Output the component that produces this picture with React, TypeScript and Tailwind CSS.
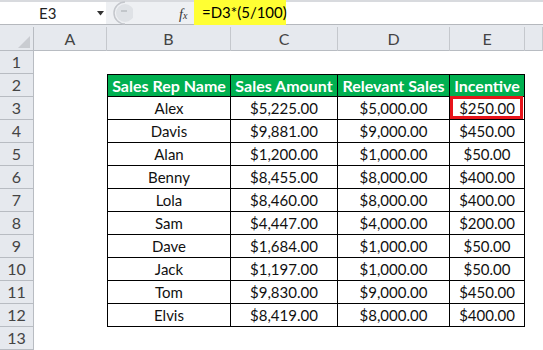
import React from "react";

const data: [string, string, string, string][] = [
  ["Alex", "$5,225.00", "$5,000.00", "$250.00"],
  ["Davis", "$9,881.00", "$9,000.00", "$450.00"],
  ["Alan", "$1,200.00", "$1,000.00", "$50.00"],
  ["Benny", "$8,455.00", "$8,000.00", "$400.00"],
  ["Lola", "$8,460.00", "$8,000.00", "$400.00"],
  ["Sam", "$4,447.00", "$4,000.00", "$200.00"],
  ["Dave", "$1,684.00", "$1,000.00", "$50.00"],
  ["Jack", "$1,197.00", "$1,000.00", "$50.00"],
  ["Tom", "$9,830.00", "$9,000.00", "$450.00"],
  ["Elvis", "$8,419.00", "$8,000.00", "$400.00"],
];

const headers = ["Sales Rep Name", "Sales Amount", "Relevant Sales", "Incentive"];
const cols = "grid-cols-[34px_73px_124px_107px_112px_75px_1fr]";

function RowHead({ n }: { n: number }) {
  return (
    <div className="h-[23px] bg-[#e6e9ee] border-r border-b border-[#b8bcc2] flex items-center justify-center text-[16px] text-[#444]">
      {n}
    </div>
  );
}

export default function App() {
  return (
    <div
      className="w-[543px] h-[350px] overflow-hidden bg-white text-black"
      style={{ fontFamily: "Lato, 'Open Sans', sans-serif" }}
    >
      {/* formula bar */}
      <div className="h-[25px] flex bg-[#eef0f3] border-t-[2px] border-[#d8dade] border-b border-b-[#b5b8bd]">
        <div className="w-[106px] bg-white flex items-center relative">
          <span className="absolute left-[39px] text-[15px] text-[#222]">E3</span>
          <svg className="absolute left-[97px] top-[9px]" width="7" height="5" viewBox="0 0 7 5">
            <path d="M0 0 L7 0 L3.5 4.5 Z" fill="#333" />
          </svg>
        </div>
        <div className="w-[88px] flex items-center relative">
          <svg className="absolute left-[3px] top-[-1px]" width="24" height="24" viewBox="0 0 24 24">
            <path d="M16 1 A11 11 0 0 0 16 23" fill="none" stroke="#c4c7cc" strokeWidth="1.5" />
            <circle cx="16" cy="12" r="9" fill="#dfe2e6" />
            <path d="M12 10 H18" stroke="#b9bcc1" strokeWidth="1.5" />
          </svg>
          <span
            className="absolute left-[73px] top-[2px] text-[14px] italic text-[#333]"
            style={{ fontFamily: "'Liberation Serif', serif" }}
          >
            f<span className="text-[10px]">x</span>
          </span>
        </div>
        <div className="flex-1 bg-white flex items-stretch">
          <div className="bg-[#ffff33] w-[92px] flex items-center pl-[8px] text-[15px] whitespace-nowrap mt-[-2px] mb-[-1px]">
            =D3*(5/100)
          </div>
        </div>
      </div>
      {/* spacer */}
      <div className="h-[2px] bg-[#e6e9ee]" />
      {/* column headers */}
      <div className={`grid ${cols} h-[24px] bg-[#e6e9ee] border-b border-[#b8bcc2]`}>
        <div className="border-r border-[#b8bcc2] relative">
          <svg className="absolute right-[3px] bottom-[3px]" width="12" height="12" viewBox="0 0 12 12">
            <path d="M12 0 L12 12 L0 12 Z" fill="#c9ccd1" />
          </svg>
        </div>
        {["A", "B", "C", "D", "E", ""].map((c, i) => (
          <div
            key={i}
            className="border-r border-[#c5c8cd] flex items-center justify-center text-[16px] text-[#444]"
          >
            {c}
          </div>
        ))}
      </div>
      {/* body */}
      <div className={`grid ${cols}`}>
        <RowHead n={1} />
        <div className="col-span-6 h-[23px]" />
        <RowHead n={2} />
        <div />
        {headers.map((h, i) => (
          <div
            key={h}
            className={`h-[23px] bg-[#00b050] text-white font-bold text-[16px] whitespace-nowrap flex items-center justify-center border-black border-t border-r border-b ${
              i === 0 ? "border-l" : ""
            }`}
          >
            {h}
          </div>
        ))}
        <div />
        {data.map((r, ri) => (
          <React.Fragment key={ri}>
            <RowHead n={ri + 3} />
            <div />
            {r.map((v, ci) => (
              <div
                key={ci}
                className={`h-[23px] relative flex items-center justify-center text-[15px] text-[#111] border-black border-r border-b ${
                  ci === 0 ? "border-l" : ""
                }`}
              >
                {v}
                {ri === 0 && ci === 3 && (
                  <div className="absolute left-0 top-[-1px] right-[1px] bottom-0 border-[3px] border-[#e8141b]" />
                )}
              </div>
            ))}
            <div />
          </React.Fragment>
        ))}
        <RowHead n={13} />
        <div className="col-span-6" />
      </div>
    </div>
  );
}
